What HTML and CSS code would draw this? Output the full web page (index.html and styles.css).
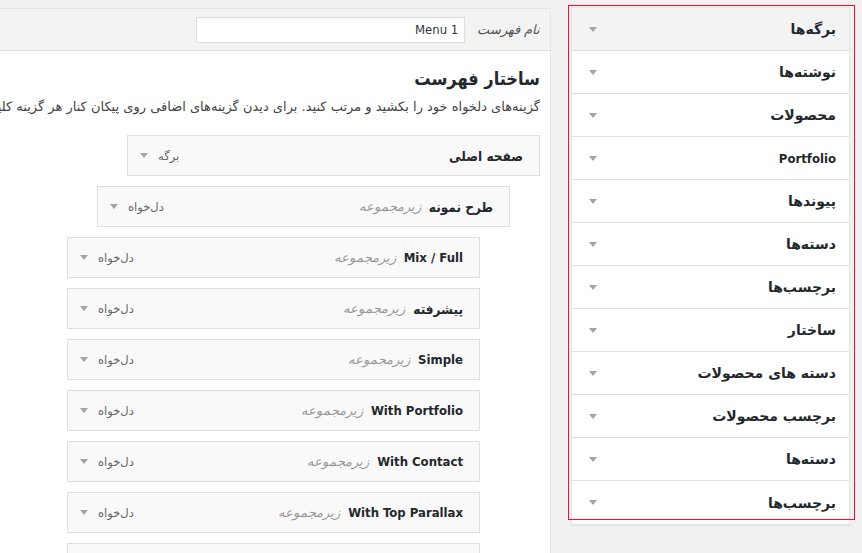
FILE: index.html
```html
<!DOCTYPE html>
<html lang="fa" dir="rtl">
<head>
<meta charset="utf-8">
<title>فهرست‌ها</title>
<link rel="stylesheet" href="styles.css">
</head>
<body>
<div class="page">
  <aside class="sidebar">
    <div class="acc-row open"><span class="acc-title">برگه‌ها</span><span class="arrow"></span></div>
    <div class="acc-row"><span class="acc-title">نوشته‌ها</span><span class="arrow"></span></div>
    <div class="acc-row"><span class="acc-title">محصولات</span><span class="arrow"></span></div>
    <div class="acc-row"><span class="acc-title latin">Portfolio</span><span class="arrow"></span></div>
    <div class="acc-row"><span class="acc-title">پیوندها</span><span class="arrow"></span></div>
    <div class="acc-row"><span class="acc-title">دسته‌ها</span><span class="arrow"></span></div>
    <div class="acc-row"><span class="acc-title">برچسب‌ها</span><span class="arrow"></span></div>
    <div class="acc-row"><span class="acc-title">ساختار</span><span class="arrow"></span></div>
    <div class="acc-row"><span class="acc-title">دسته های محصولات</span><span class="arrow"></span></div>
    <div class="acc-row"><span class="acc-title">برچسب محصولات</span><span class="arrow"></span></div>
    <div class="acc-row"><span class="acc-title">دسته‌ها</span><span class="arrow"></span></div>
    <div class="acc-row last"><span class="acc-title">برچسب‌ها</span><span class="arrow"></span></div>
    <div class="highlight"></div>
  </aside>

  <main class="editor">
    <div class="editor-head">
      <label class="name-label">نام فهرست</label>
      <input class="name-input" type="text" value="Menu 1">
    </div>
    <div class="editor-body">
      <h3 class="struct-title">ساختار فهرست</h3>
      <p class="struct-desc">گزینه‌های دلخواه خود را بکشید و مرتب کنید. برای دیدن گزینه‌های اضافی روی پیکان کنار هر گزینه کلیک کنید.</p>
      <ul class="menu-list">
        <li class="item depth-0"><span class="item-title">صفحه اصلی</span><span class="item-type">برگه</span><span class="arrow"></span></li>
        <li class="item depth-1"><span class="item-title">طرح نمونه</span><span class="item-sub">زیرمجموعه</span><span class="item-type">دل‌خواه</span><span class="arrow"></span></li>
        <li class="item depth-2"><span class="item-title latin">Mix / Full</span><span class="item-sub">زیرمجموعه</span><span class="item-type">دل‌خواه</span><span class="arrow"></span></li>
        <li class="item depth-2"><span class="item-title">پیشرفته</span><span class="item-sub">زیرمجموعه</span><span class="item-type">دل‌خواه</span><span class="arrow"></span></li>
        <li class="item depth-2"><span class="item-title latin">Simple</span><span class="item-sub">زیرمجموعه</span><span class="item-type">دل‌خواه</span><span class="arrow"></span></li>
        <li class="item depth-2"><span class="item-title latin">With Portfolio</span><span class="item-sub">زیرمجموعه</span><span class="item-type">دل‌خواه</span><span class="arrow"></span></li>
        <li class="item depth-2"><span class="item-title latin">With Contact</span><span class="item-sub">زیرمجموعه</span><span class="item-type">دل‌خواه</span><span class="arrow"></span></li>
        <li class="item depth-2"><span class="item-title latin">With Top Parallax</span><span class="item-sub">زیرمجموعه</span><span class="item-type">دل‌خواه</span><span class="arrow"></span></li>
        <li class="item depth-2 item-partial"></li>
      </ul>
    </div>
  </main>
</div>
</body>
</html>
```

FILE: styles.css
```css
html, body {
  margin: 0;
  padding: 0;
  height: 100%;
}
body {
  background: #f1f1f1;
  direction: rtl;
  overflow: hidden;
  font-family: Tahoma, "DejaVu Sans", sans-serif;
  color: #23282d;
  font-size: 13px;
}
.page {
  display: flex;
  flex-direction: row;
  align-items: flex-start;
  gap: 20px;
  padding: 7px 12px 0 0;
}

/* Sidebar accordion */
.sidebar {
  position: relative;
  flex: 0 0 279px;
  background: #fff;
  border: 1px solid #e5e5e5;
  box-shadow: 0 1px 1px rgba(0,0,0,.05);
  box-sizing: border-box;
}
.acc-row {
  display: flex;
  align-items: center;
  justify-content: space-between;
  height: 43px;
  box-sizing: border-box;
  padding: 0 13px 0 17px;
  border-bottom: 1px solid #e1e1e1;
  background: #fff;
}
.acc-row.open {
  background: #f3f3f3;
}
.acc-row.last {
  border-bottom: none;
}
.acc-title {
  font-size: 14px;
  font-weight: bold;
  color: #23282d;
}
.acc-title.latin {
  font-family: Tahoma, "DejaVu Sans Condensed", "DejaVu Sans", sans-serif;
  font-size: 13px;
}
.arrow {
  display: inline-block;
  width: 0;
  height: 0;
  border-left: 4px solid transparent;
  border-right: 4px solid transparent;
  border-top: 5px solid #a0a5aa;
}
.highlight {
  position: absolute;
  top: -3px;
  left: -4px;
  right: -6px;
  bottom: 4px;
  border: 1px solid #ff0a2a;
  pointer-events: none;
}

/* Editor */
.editor {
  flex: 0 0 1000px;
  margin-top: 1px;
  background: #fff;
  border: 1px solid #e5e5e5;
  min-height: 600px;
}
.editor-head {
  display: flex;
  align-items: center;
  gap: 12px;
  height: 41px;
  padding: 0 10px;
  background: #f3f3f3;
  border-bottom: 1px solid #dfdfdf;
}
.name-label {
  font-family: Tahoma, "DejaVu Sans Condensed", "DejaVu Sans", sans-serif;
  font-style: italic;
  color: #555;
  font-size: 13px;
}
.name-input {
  width: 269px;
  height: 26px;
  box-sizing: border-box;
  border: 1px solid #ddd;
  background: #fff;
  padding: 0 6px;
  font-family: Tahoma, "DejaVu Sans Condensed", "DejaVu Sans", sans-serif;
  font-size: 13px;
  color: #32373c;
  direction: rtl;
  text-align: right;
  box-shadow: inset 0 1px 2px rgba(0,0,0,.04);
}
.editor-body {
  padding: 16px 10px 0 0;
}
.struct-title {
  margin: 0;
  font-family: Tahoma, "DejaVu Sans Condensed", "DejaVu Sans", sans-serif;
  font-size: 18px;
  line-height: 24px;
  font-weight: bold;
  color: #23282d;
}
.struct-desc {
  margin: 6px 0 0;
  font-size: 13px;
  line-height: 20px;
  white-space: nowrap;
  color: #444;
}
.menu-list {
  list-style: none;
  margin: 18px 0 0;
  padding: 0;
}
.item {
  display: flex;
  align-items: center;
  width: 413px;
  height: 41px;
  box-sizing: border-box;
  margin-bottom: 10px;
  padding: 0 16px 0 12px;
  background: #f9f9f9;
  border: 1px solid #dfdfdf;
}
.depth-1 { margin-right: 30px; }
.depth-2 { margin-right: 60px; }
.item-title {
  font-family: Tahoma, "DejaVu Sans Condensed", "DejaVu Sans", sans-serif;
  font-weight: bold;
  font-size: 13.5px;
  color: #23282d;
}
.item-title.latin {
  font-size: 13px;
}
.item-sub {
  margin-right: 8px;
  font-family: Tahoma, "DejaVu Sans Condensed", "DejaVu Sans", sans-serif;
  font-style: italic;
  font-size: 13px;
  color: #999;
}
.item-type {
  margin-right: auto;
  margin-left: 10px;
  font-size: 11.5px;
  color: #666;
}
```
